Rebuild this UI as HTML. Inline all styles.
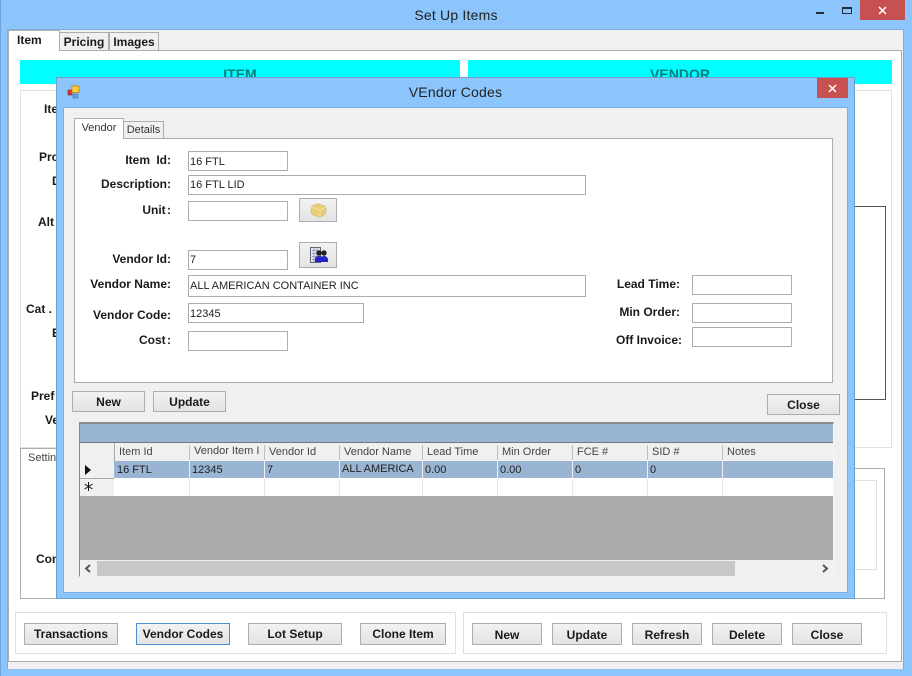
<!DOCTYPE html>
<html><head><meta charset="utf-8"><title>Set Up Items</title>
<style>
html,body{margin:0;padding:0}
body{width:912px;height:676px;overflow:hidden;background:#8cc5fb;position:relative;font-family:"Liberation Sans",sans-serif;font-size:12px;color:#111}
div{position:absolute;box-sizing:border-box;white-space:nowrap}
svg{position:absolute}
.l{font-weight:bold;text-align:right;line-height:14px;height:14px;color:#1a1a1a}
.f{background:#fff;border:1px solid #adadad;padding-left:1px;font-size:11px;line-height:18px;color:#222}
.b{background:linear-gradient(#f2f2f2,#e3e3e3);border:1px solid #adadad;font-weight:bold;text-align:center;line-height:20px;color:#1a1a1a}
.h{color:#444;font-size:11px;line-height:14px;top:445px}
.c{font-size:11px;line-height:14px;color:#222;top:463px}
.v{background:#e8e8e8;width:1px;top:479px;height:17px}
.s{background:#bfbfbf;width:1px;top:445px;height:15px}
.w{background:#f0f0f0;width:1px;top:461px;height:17px}
.p{background:#fff;border:1px solid #e0e0e0}
.t{font-weight:bold;text-align:left;line-height:14px;height:14px;color:#1a1a1a}
</style></head><body>
<div style="left:0;top:0;width:1px;height:676px;background:#6ea4d8"></div>
<div style="left:0;top:0;width:912px;height:30px;text-align:center;font-size:14px;letter-spacing:.2px;line-height:30px;color:#222">Set Up Items</div>
<svg style="left:0;top:0" width="912" height="30">
<rect x="860" y="0" width="45" height="20" fill="#c75050"/>
<path d="M879 7l7 7M886 7l-7 7" stroke="#fff" stroke-width="1.5" fill="none"/>
<rect x="816" y="12" width="8" height="2" fill="#1f2d3d"/>
<rect x="842.5" y="7.5" width="9" height="6" fill="none" stroke="#1f2d3d" stroke-width="1"/>
<rect x="842" y="7" width="10" height="2" fill="#1f2d3d"/>
</svg>

<!-- main client -->
<div style="left:7px;top:29px;width:897px;height:640px;background:#f0f0f0;border:1px solid #7aaedd;border-bottom:0"></div>
<div style="left:8px;top:50px;width:894px;height:612px;background:#fff;border:1px solid #adadad"></div>
<div style="left:8px;top:30px;width:52px;height:21px;background:#fff;border:1px solid #adadad;border-bottom:0;font-weight:bold;line-height:18px;padding-left:8px;color:#1a1a1a">Item</div>
<div style="left:59px;top:32px;width:50px;height:19px;background:#f0f0f0;border:1px solid #adadad;font-weight:bold;line-height:18px;text-align:center;color:#1a1a1a">Pricing</div>
<div style="left:109px;top:32px;width:50px;height:19px;background:#f0f0f0;border:1px solid #adadad;font-weight:bold;line-height:18px;text-align:center;color:#1a1a1a">Images</div>

<div style="left:20px;top:60px;width:440px;height:24px;background:#0ff;font-weight:bold;font-size:14px;line-height:28px;text-align:center;color:#007c80">ITEM</div>
<div style="left:468px;top:60px;width:424px;height:24px;background:#0ff;font-weight:bold;font-size:14px;line-height:28px;text-align:center;color:#007c80">VENDOR</div>
<div class="p" style="left:20px;top:90px;width:441px;height:358px"></div>
<div class="p" style="left:468px;top:90px;width:424px;height:358px"></div>
<div style="left:780px;top:206px;width:106px;height:194px;border:1px solid #555"></div>
<div style="left:20px;top:448px;width:441px;height:151px;border:1px solid #adadad;background:#fff"></div>
<div style="left:780px;top:468px;width:105px;height:131px;border:1px solid #adadad"></div>
<div style="left:780px;top:480px;width:97px;height:90px;border:1px solid #e0e0e0"></div>

<div class="t" style="left:44px;top:102px">Item</div>
<div class="t" style="left:39px;top:150px">Prod</div>
<div class="t" style="left:52px;top:174px">D</div>
<div class="t" style="left:38px;top:215px">Alt</div>
<div class="t" style="left:26px;top:302px">Cat .</div>
<div class="t" style="left:52px;top:326px">E</div>
<div class="t" style="left:31px;top:389px">Pref .</div>
<div class="t" style="left:45px;top:413px">Ve</div>
<div style="left:28px;top:451px;line-height:14px;font-size:11px;color:#444">Settings</div>
<div class="t" style="left:36px;top:552px">Com</div>

<!-- bottom bars -->
<div class="p" style="left:15px;top:612px;width:441px;height:42px"></div>
<div class="p" style="left:463px;top:612px;width:424px;height:42px"></div>
<div class="b" style="left:24px;top:623px;width:94px;height:22px">Transactions</div>
<div class="b" style="left:136px;top:623px;width:94px;height:22px;border-color:#4a90d0">Vendor Codes</div>
<div class="b" style="left:248px;top:623px;width:94px;height:22px">Lot Setup</div>
<div class="b" style="left:360px;top:623px;width:86px;height:22px">Clone Item</div>
<div class="b" style="left:472px;top:623px;width:70px;height:22px;line-height:22px">New</div>
<div class="b" style="left:552px;top:623px;width:70px;height:22px;line-height:22px">Update</div>
<div class="b" style="left:632px;top:623px;width:70px;height:22px;line-height:22px">Refresh</div>
<div class="b" style="left:712px;top:623px;width:70px;height:22px;line-height:22px">Delete</div>
<div class="b" style="left:792px;top:623px;width:70px;height:22px;line-height:22px">Close</div>

<!-- dialog -->
<div style="left:56px;top:77px;width:799px;height:522px;background:#8cc5fb;border:1px solid #6f9fc8"></div>
<div style="left:63px;top:107px;width:785px;height:486px;background:#f0f0f0;border:1px solid #7aaedd"></div>
<div style="left:56px;top:78px;width:799px;height:30px;text-align:center;font-size:14px;letter-spacing:.2px;line-height:29px;color:#222">VEndor Codes</div>
<svg style="left:67px;top:85px" width="14" height="14"><rect x="1" y="5" width="4" height="5" fill="#d33" stroke="#822" stroke-width=".6"/><rect x="5" y="1" width="7" height="6.5" fill="#fc4" stroke="#b80" stroke-width=".8"/><rect x="6" y="9" width="5" height="4" fill="#6a9be0" stroke="#47a" stroke-width=".6"/></svg>
<div style="left:817px;top:78px;width:31px;height:20px;background:#c75050"></div>
<svg style="left:817px;top:78px" width="31" height="20"><path d="M12 7l7 7M19 7l-7 7" stroke="#fff" stroke-width="1.5" fill="none"/></svg>

<div style="left:74px;top:138px;width:759px;height:245px;background:#fff;border:1px solid #adadad"></div>
<div style="left:74px;top:118px;width:50px;height:21px;background:#fff;border:1px solid #adadad;border-bottom:0;font-size:11px;line-height:18px;text-align:center;color:#333">Vendor</div>
<div style="left:123px;top:121px;width:41px;height:18px;background:#f0f0f0;border:1px solid #adadad;font-size:11px;line-height:17px;text-align:center;color:#333">Details</div>

<div class="l" style="left:70px;top:153px;width:101px;word-spacing:3px">Item Id:</div>
<div class="l" style="left:70px;top:177px;width:101px">Description:</div>
<div class="l" style="left:70px;top:203px;width:101px;word-spacing:-2px">Unit :</div>
<div class="l" style="left:70px;top:252px;width:101px">Vendor Id:</div>
<div class="l" style="left:70px;top:277px;width:101px">Vendor Name:</div>
<div class="l" style="left:70px;top:308px;width:101px">Vendor Code:</div>
<div class="l" style="left:70px;top:333px;width:101px;word-spacing:-2px">Cost :</div>
<div class="l" style="left:580px;top:277px;width:100px">Lead Time:</div>
<div class="l" style="left:580px;top:305px;width:100px">Min Order:</div>
<div class="l" style="left:580px;top:333px;width:102px">Off Invoice:</div>

<div class="f" style="left:188px;top:151px;width:100px;height:20px;line-height:20px">16 FTL</div>
<div class="f" style="left:188px;top:175px;width:398px;height:20px">16 FTL LID</div>
<div class="f" style="left:188px;top:201px;width:100px;height:20px"></div>
<div class="f" style="left:188px;top:250px;width:100px;height:20px">7</div>
<div class="f" style="left:188px;top:275px;width:398px;height:22px;line-height:20px">ALL AMERICAN CONTAINER INC</div>
<div class="f" style="left:188px;top:303px;width:176px;height:20px;line-height:20px">12345</div>
<div class="f" style="left:188px;top:331px;width:100px;height:20px"></div>
<div class="f" style="left:692px;top:275px;width:100px;height:20px"></div>
<div class="f" style="left:692px;top:303px;width:100px;height:20px"></div>
<div class="f" style="left:692px;top:327px;width:100px;height:20px"></div>

<div class="b" style="left:299px;top:198px;width:38px;height:24px"></div>
<svg style="left:310px;top:203px" width="17" height="15"><path d="M1 5Q1 4 2 3L7 1Q8 .5 9 1l6 2q1 .5 1 2v4q0 1-1 2l-4 3q-1 .5-2 0L3 12Q1 11 1 9z" fill="#e8cd74" stroke="#c9ad58" stroke-width=".5"/><path d="M1 4l9 3 6-3-6 3v7" fill="none" stroke="#f5e7ae" stroke-width=".8"/></svg>
<div class="b" style="left:299px;top:242px;width:38px;height:26px"></div>
<svg style="left:310px;top:247px" width="18" height="17"><rect x=".5" y=".5" width="10" height="15" fill="#e4e6ee" stroke="#667"/><path d="M2 3.5h7M2 6.5h7M2 9.5h7M2 12.5h7M4 1v14M7 1v14" stroke="#8a90a8" stroke-width=".7"/><circle cx="9" cy="6" r="2.7" fill="#222"/><circle cx="14" cy="6" r="2.7" fill="#222"/><path d="M5 15v-3q0-3 4-3t4 3v3z" fill="#2424c8"/><path d="M11 15v-3q0-3 3-3t4 3v3z" fill="#2424c8"/></svg>

<div class="b" style="left:72px;top:391px;width:73px;height:21px;line-height:21px">New</div>
<div class="b" style="left:153px;top:391px;width:73px;height:21px;line-height:21px">Update</div>
<div class="b" style="left:767px;top:394px;width:73px;height:21px;line-height:21px">Close</div>

<!-- grid -->
<div style="left:79px;top:422px;width:755px;height:155px;background:#ababab;border-left:1px solid #8a8a8a;border-top:2px solid #8a8a8a;border-right:1px solid #f5f5f5;border-bottom:1px solid #f5f5f5"></div>
<div style="left:80px;top:424px;width:753px;height:18px;background:#9ab5d3"></div>
<div style="left:80px;top:442px;width:753px;height:1px;background:#777"></div>
<div style="left:80px;top:443px;width:753px;height:18px;background:#f0f0f0"></div>
<div style="left:80px;top:461px;width:34px;height:18px;background:#f0f0f0;border-bottom:1px solid #aaa"></div>
<div style="left:80px;top:479px;width:34px;height:17px;background:#f0f0f0"></div>
<div style="left:114px;top:461px;width:719px;height:17px;background:#9ab5d3"></div>
<div style="left:114px;top:478px;width:719px;height:18px;background:#fff"></div>
<div style="left:114px;top:443px;width:1px;height:18px;background:#aaa"></div>
<svg style="left:84px;top:464px" width="8" height="12"><path d="M1 1l6 5-6 5z" fill="#111"/></svg>
<svg style="left:83px;top:481px" width="11" height="11"><path d="M5.5 1v9M1.5 3l8 5M9.5 3l-8 5" stroke="#111" stroke-width="1" fill="none"/></svg>

<div class="s" style="left:189px"></div><div class="s" style="left:264px"></div><div class="s" style="left:339px"></div><div class="s" style="left:422px"></div><div class="s" style="left:497px"></div><div class="s" style="left:572px"></div><div class="s" style="left:647px"></div><div class="s" style="left:722px"></div>
<div class="v" style="left:189px"></div><div class="v" style="left:264px"></div><div class="v" style="left:339px"></div><div class="v" style="left:422px"></div><div class="v" style="left:497px"></div><div class="v" style="left:572px"></div><div class="v" style="left:647px"></div><div class="v" style="left:722px"></div>
<div class="w" style="left:189px"></div><div class="w" style="left:264px"></div><div class="w" style="left:339px"></div><div class="w" style="left:422px"></div><div class="w" style="left:497px"></div><div class="w" style="left:572px"></div><div class="w" style="left:647px"></div><div class="w" style="left:722px"></div>

<div class="h" style="left:119px">Item Id</div>
<div class="h" style="left:194px;top:444px;width:66px;overflow:hidden">Vendor Item I</div>
<div class="h" style="left:269px">Vendor Id</div>
<div class="h" style="left:344px">Vendor Name</div>
<div class="h" style="left:427px">Lead Time</div>
<div class="h" style="left:502px">Min Order</div>
<div class="h" style="left:577px">FCE #</div>
<div class="h" style="left:652px">SID #</div>
<div class="h" style="left:727px">Notes</div>

<div class="c" style="left:117px">16 FTL</div>
<div class="c" style="left:192px">12345</div>
<div class="c" style="left:267px">7</div>
<div class="c" style="left:342px;top:462px;width:78px;overflow:hidden">ALL AMERICA</div>
<div class="c" style="left:425px">0.00</div>
<div class="c" style="left:500px">0.00</div>
<div class="c" style="left:575px">0</div>
<div class="c" style="left:650px">0</div>

<!-- scrollbar -->
<div style="left:80px;top:560px;width:753px;height:17px;background:#f0f0f0"></div>
<div style="left:97px;top:561px;width:638px;height:15px;background:#c8c8c8"></div>
<svg style="left:80px;top:560px" width="17" height="17"><path d="M10 5l-4 3.5 4 3.5" fill="none" stroke="#555" stroke-width="2"/></svg>
<svg style="left:816px;top:560px" width="17" height="17"><path d="M7 5l4 3.5-4 3.5" fill="none" stroke="#555" stroke-width="2"/></svg>
</body></html>
